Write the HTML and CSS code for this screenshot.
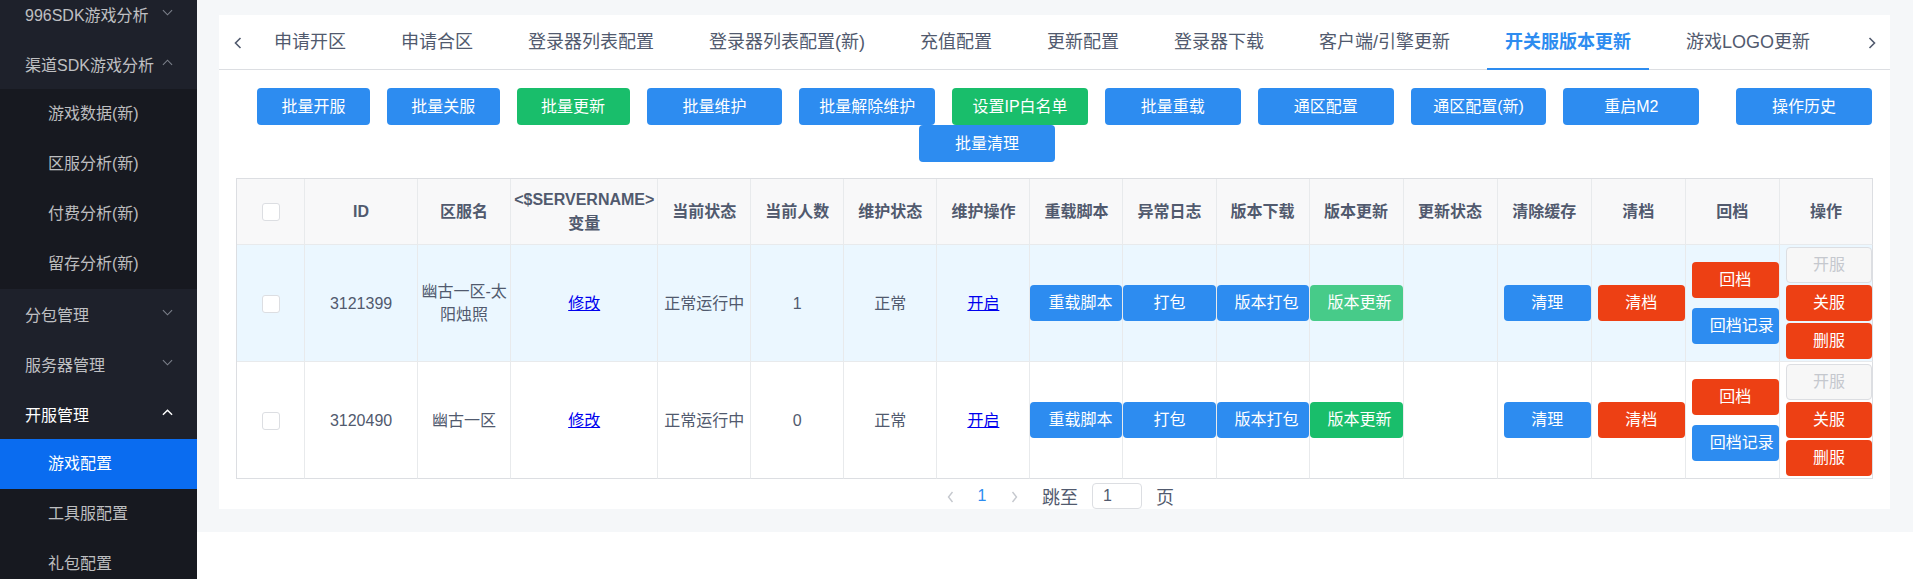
FILE: index.html
```html
<!DOCTYPE html>
<html lang="zh-CN">
<head>
<meta charset="utf-8">
<title>开关服版本更新</title>
<link rel="stylesheet" href="styles.css">
</head>
<body>
<div class="app">
  <aside class="sidebar">
    <div class="menu">
      <div class="menu-title">996SDK游戏分析<svg class="chev" viewBox="0 0 12 7"><polyline points="1,1 6,6 11,1"/></svg></div>
      <div class="menu-title">渠道SDK游戏分析<svg class="chev" viewBox="0 0 12 7"><polyline points="1,6 6,1 11,6"/></svg></div>
      <div class="submenu">
        <div class="menu-item">游戏数据(新)</div>
        <div class="menu-item">区服分析(新)</div>
        <div class="menu-item">付费分析(新)</div>
        <div class="menu-item">留存分析(新)</div>
      </div>
      <div class="menu-title">分包管理<svg class="chev" viewBox="0 0 12 7"><polyline points="1,1 6,6 11,1"/></svg></div>
      <div class="menu-title">服务器管理<svg class="chev" viewBox="0 0 12 7"><polyline points="1,1 6,6 11,1"/></svg></div>
      <div class="menu-title current">开服管理<svg class="chev" viewBox="0 0 12 7"><polyline points="1,6 6,1 11,6"/></svg></div>
      <div class="submenu">
        <div class="menu-item active">游戏配置</div>
        <div class="menu-item">工具服配置</div>
        <div class="menu-item">礼包配置</div>
      </div>
    </div>
  </aside>

  <main class="main">
    <div class="card">
      <div class="tabs">
        <div class="tab-arrow"><svg viewBox="0 0 8 12"><polyline points="6.5,1 1.5,6 6.5,11"/></svg></div>
        <div class="tab-list">
          <div class="tab">申请开区</div>
          <div class="tab">申请合区</div>
          <div class="tab">登录器列表配置</div>
          <div class="tab">登录器列表配置(新)</div>
          <div class="tab">充值配置</div>
          <div class="tab">更新配置</div>
          <div class="tab">登录器下载</div>
          <div class="tab">客户端/引擎更新</div>
          <div class="tab active">开关服版本更新</div>
          <div class="tab">游戏LOGO更新</div>
        </div>
        <div class="tab-arrow"><svg viewBox="0 0 8 12"><polyline points="1.5,1 6.5,6 1.5,11"/></svg></div>
      </div>

      <div class="card-body">
        <div class="toolbar">
          <span class="btn primary w113">批量开服</span>
          <span class="btn primary w113">批量关服</span>
          <span class="btn success w113">批量更新</span>
          <span class="btn primary w136">批量维护</span>
          <span class="btn primary w136">批量解除维护</span>
          <span class="btn success w136">设置IP白名单</span>
          <span class="btn primary w136">批量重载</span>
          <span class="btn primary w136">通区配置</span>
          <span class="btn primary w136">通区配置(新)</span>
          <span class="btn primary w136">重启M2</span>
          <span class="btn primary w136 history">操作历史</span>
        </div>
        <div class="toolbar toolbar-second">
          <span class="btn primary w136">批量清理</span>
        </div>

        <table class="grid">
          <thead>
            <tr>
              <th class="c-check"><span class="checkbox"></span></th>
              <th class="c-id">ID</th>
              <th class="c-93">区服名</th>
              <th class="c-var">&lt;$SERVERNAME&gt;<br>变量</th>
              <th class="c-93">当前状态</th>
              <th class="c-93">当前人数</th>
              <th class="c-93">维护状态</th>
              <th class="c-93">维护操作</th>
              <th class="c-93">重载脚本</th>
              <th class="c-93">异常日志</th>
              <th class="c-93">版本下载</th>
              <th class="c-94">版本更新</th>
              <th class="c-94">更新状态</th>
              <th class="c-94">清除缓存</th>
              <th class="c-94">清档</th>
              <th class="c-94">回档</th>
              <th class="c-93 last">操作</th>
            </tr>
          </thead>
          <tbody>
            <tr class="hovered">
              <td><span class="checkbox"></span></td>
              <td>3121399</td>
              <td>幽古一区-太<br>阳烛照</td>
              <td><a href="#">修改</a></td>
              <td>正常运行中</td>
              <td>1</td>
              <td>正常</td>
              <td><a href="#">开启</a></td>
              <td class="fill"><span class="tbtn primary">重载脚本</span></td>
              <td class="fill"><span class="tbtn primary">打包</span></td>
              <td class="fill"><span class="tbtn primary">版本打包</span></td>
              <td class="fill"><span class="tbtn success-hover">版本更新</span></td>
              <td></td>
              <td class="inset"><span class="tbtn primary">清理</span></td>
              <td class="inset"><span class="tbtn error">清档</span></td>
              <td class="inset pair"><span class="tbtn error">回档</span><span class="tbtn primary">回档记录</span></td>
              <td class="inset stack last"><span class="tbtn disabled">开服</span><span class="tbtn error">关服</span><span class="tbtn error">删服</span></td>
            </tr>
            <tr>
              <td class="bottom"><span class="checkbox"></span></td>
              <td class="bottom">3120490</td>
              <td class="bottom">幽古一区</td>
              <td class="bottom"><a href="#">修改</a></td>
              <td class="bottom">正常运行中</td>
              <td class="bottom">0</td>
              <td class="bottom">正常</td>
              <td class="bottom"><a href="#">开启</a></td>
              <td class="bottom fill"><span class="tbtn primary">重载脚本</span></td>
              <td class="bottom fill"><span class="tbtn primary">打包</span></td>
              <td class="bottom fill"><span class="tbtn primary">版本打包</span></td>
              <td class="bottom fill"><span class="tbtn success">版本更新</span></td>
              <td class="bottom"></td>
              <td class="bottom inset"><span class="tbtn primary">清理</span></td>
              <td class="bottom inset"><span class="tbtn error">清档</span></td>
              <td class="bottom inset pair"><span class="tbtn error">回档</span><span class="tbtn primary">回档记录</span></td>
              <td class="bottom inset stack last"><span class="tbtn disabled">开服</span><span class="tbtn error">关服</span><span class="tbtn error">删服</span></td>
            </tr>
          </tbody>
        </table>

        <div class="pager">
          <span class="pg-arrow"><svg viewBox="0 0 7 12"><polyline points="5.5,1 1.5,6 5.5,11"/></svg></span>
          <span class="pg-num">1</span>
          <span class="pg-arrow"><svg viewBox="0 0 7 12"><polyline points="1.5,1 5.5,6 1.5,11"/></svg></span>
          <span class="pg-label">跳至</span>
          <input class="pg-input" type="text" value="1">
          <span class="pg-unit">页</span>
        </div>
      </div>
    </div>
  </main>
</div>
</body>
</html>
```

FILE: styles.css
```css
html, body {
  margin: 0;
  padding: 0;
  background: #fff;
}

body {
  font-family: "Liberation Sans", "Noto Sans CJK SC", sans-serif;
  color: #515a6e;
}

.app {
  display: flex;
  align-items: flex-start;
  height: 100vh;
  overflow: hidden;
}

/* ---------- sidebar ---------- */
.sidebar {
  width: 197px;
  flex: none;
  height: 100vh;
  background: #1e212b;
  overflow: hidden;
}

.menu {
  margin-top: -11px;
}

.menu-title {
  height: 50px;
  display: flex;
  align-items: center;
  justify-content: space-between;
  padding: 0 24px 0 25px;
  font-size: 16px;
  color: rgba(255, 255, 255, 0.72);
  white-space: nowrap;
}

.menu-title.current {
  color: #fff;
}

.chev {
  width: 11px;
  height: 7px;
  margin-top: -4px;
  fill: none;
  stroke: #7c808a;
  stroke-width: 1.2;
}

.menu-title.current .chev {
  stroke: #fff;
  stroke-width: 1.6;
}

.submenu {
  background: #171920;
}

.menu-item {
  height: 50px;
  line-height: 50px;
  padding-left: 48px;
  font-size: 16px;
  color: rgba(255, 255, 255, 0.72);
  white-space: nowrap;
}

.menu-item.active {
  background: #0a6cf0;
  color: #fff;
}

/* ---------- main ---------- */
.main {
  flex: 1;
  min-width: 0;
  background: #f5f7f9;
  padding: 15px 23px 23px 22px;
}

.card {
  background: #fff;
}

.tabs {
  display: flex;
  height: 55px;
  box-shadow: inset 0 -1px 0 #dcdee2;
}

.tab-arrow {
  width: 37px;
  flex: none;
  display: flex;
  align-items: center;
  justify-content: center;
}

.tab-arrow svg {
  width: 8px;
  height: 12px;
  fill: none;
  stroke: #515a6e;
  stroke-width: 1.6;
}

.tab-list {
  flex: 1;
  min-width: 0;
  display: flex;
  overflow: hidden;
}

.tab {
  flex: none;
  box-sizing: border-box;
  height: 55px;
  padding: 2px 18px 0;
  margin-right: 19px;
  line-height: 51px;
  border-bottom: 2px solid transparent;
  font-size: 18px;
  white-space: nowrap;
  color: #515a6e;
}

.tab.active {
  color: #2d8cf0;
  font-weight: bold;
  border-bottom-color: #2d8cf0;
}

.card-body {
  padding: 0 18px 0 17px;
}

/* ---------- toolbar buttons ---------- */
.toolbar {
  display: flex;
  gap: 17px;
  padding-left: 21px;
  margin-top: 18px;
}

.toolbar-second {
  margin-top: 0;
  padding-left: 683px;
}

.btn {
  box-sizing: border-box;
  height: 37px;
  line-height: 37px;
  padding: 0 18px;
  border-radius: 4px;
  font-size: 16px;
  color: #fff;
  text-align: center;
  white-space: nowrap;
}

.w113 { width: 113px; }
.w136 { width: 136px; }

.btn.history {
  margin-left: 20px;
}

.primary { background: #2d8cf0; }
.success { background: #19be6b; }
.success-hover { background: #47cb89; }
.error { background: #ed4014; }

/* ---------- table ---------- */
.grid {
  margin-top: 16px;
  width: 1637px;
  table-layout: fixed;
  border-collapse: separate;
  border-spacing: 0;
  border-top: 1px solid #dcdee2;
  border-left: 1px solid #dcdee2;
}

.grid th,
.grid td {
  box-sizing: border-box;
  border-right: 1px solid #e8eaec;
  border-bottom: 1px solid #e8eaec;
  padding: 0 3px;
  text-align: center;
  vertical-align: middle;
  font-size: 16px;
  line-height: 23px;
  color: #515a6e;
}

.grid th {
  height: 66px;
  background: #f8f8f9;
  font-weight: bold;
  line-height: 24px;
}

.grid td {
  height: 117px;
}

.grid th.last,
.grid td.last {
  border-right-color: #dcdee2;
}

.grid td.bottom {
  border-bottom-color: #dcdee2;
}

.c-check { width: 68px; }
.c-id { width: 113px; }
.c-93 { width: 93px; }
.c-94 { width: 94px; }
.c-var { width: 147px; }

.grid tr.hovered td {
  background: #ebf7ff;
}

.checkbox {
  display: inline-block;
  box-sizing: border-box;
  width: 18px;
  height: 18px;
  border: 1px solid #dcdee2;
  border-radius: 3px;
  background: #fff;
  vertical-align: middle;
}

.grid a {
  color: #0000ee;
  text-decoration: underline;
}

.grid td.fill {
  padding: 0;
}

.grid td.inset {
  padding: 0 0 0 6px;
}

.tbtn {
  display: block;
  box-sizing: border-box;
  width: 100%;
  height: 36px;
  line-height: 36px;
  padding: 0 18px;
  border-radius: 4px;
  font-size: 16px;
  color: #fff;
  text-align: center;
  white-space: nowrap;
}

.pair .tbtn + .tbtn {
  margin-top: 10px;
}

.stack .tbtn + .tbtn {
  margin-top: 2px;
}

.tbtn.disabled {
  background: #f7f7f7;
  border: 1px solid #dcdee2;
  color: #c5c8ce;
  line-height: 34px;
}

/* ---------- pager ---------- */
.pager {
  display: flex;
  justify-content: center;
  align-items: center;
  padding-top: 4px;
  height: 26px;
}

.pg-arrow,
.pg-num {
  width: 32px;
  text-align: center;
  font-size: 16px;
  line-height: 26px;
}

.pg-arrow svg {
  width: 7px;
  height: 12px;
  fill: none;
  stroke: #c5c8ce;
  stroke-width: 1.4;
  vertical-align: middle;
}

.pg-num {
  color: #2d8cf0;
}

.pg-label {
  margin-left: 12px;
  font-size: 18px;
  color: #515a6e;
}

.pg-input {
  box-sizing: border-box;
  width: 50px;
  height: 26px;
  margin: 0 14px;
  padding: 0 0 0 10px;
  border: 1px solid #dcdee2;
  border-radius: 4px;
  font-family: "Liberation Sans", "Noto Sans CJK SC", sans-serif;
  font-size: 16px;
  color: #515a6e;
  outline: none;
}

.pg-unit {
  font-size: 18px;
  color: #515a6e;
}
```
